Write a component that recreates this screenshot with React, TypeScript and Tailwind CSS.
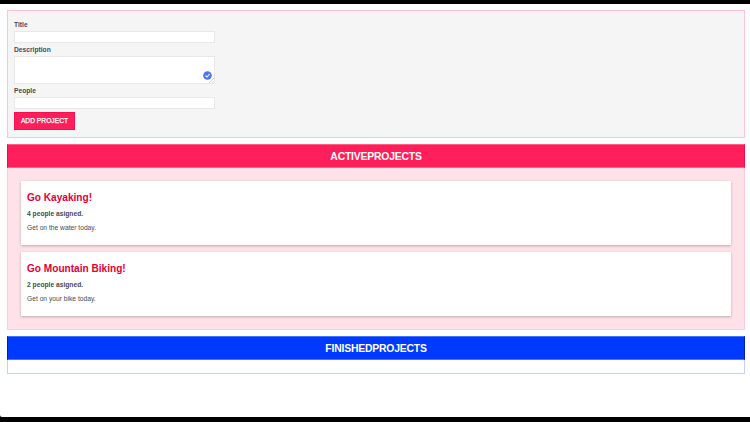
import React from "react";

const projects = [
  { title: "Go Kayaking!", people: "4 people asigned.", text: "Get on the water today." },
  { title: "Go Mountain Biking!", people: "2 people asigned.", text: "Get on your bike today." },
];

function Label({ children }: { children: React.ReactNode }) {
  return <label className="block h-[9px] text-[6.7px] leading-[9px] font-bold text-[#4b4b55]">{children}</label>;
}

function ProjectForm() {
  return (
    <form className="h-[128px] border border-[#ffc4d4] bg-[#f5f5f5] pt-[9px] pl-[6px]">
      <Label>Title</Label>
      <input className="mt-[2px] block h-[12px] w-[201px] border border-[#e8e8e8] bg-white px-1 text-[7px] outline-none" />
      <div className="mt-[2px]">
        <Label>Description</Label>
      </div>
      <div className="relative mt-[2px] h-[28px] w-[201px]">
        <textarea className="block h-full w-full resize-none border border-[#e8e8e8] bg-white px-1 text-[7px] outline-none" />
        <svg className="absolute top-[15px] left-[189px] h-[9px] w-[9px]" viewBox="0 0 9 9">
          <circle cx="4.5" cy="4.5" r="4.3" fill="#4f78ed" />
          <path d="M2.5 4.7 4 6 6.6 3" fill="none" stroke="#fff" strokeWidth="1.1" />
        </svg>
        <svg className="absolute right-[1px] bottom-[1px] h-[5px] w-[5px]" viewBox="0 0 5 5">
          <path d="M0 5 5 0M2.7 5 5 2.7" stroke="#aaa" strokeWidth=".5" />
        </svg>
      </div>
      <div className="mt-[2px]">
        <Label>People</Label>
      </div>
      <input className="mt-[2px] block h-[12px] w-[201px] border border-[#e8e8e8] bg-white px-1 text-[7px] outline-none" />
      <button type="button" className="mt-[3px] block h-[18px] w-[61px] border border-[#f70f51] bg-[#ff1f5a] text-[6.7px] leading-[16px] whitespace-nowrap text-white [-webkit-text-stroke:0.25px_white]">
        ADD PROJECT
      </button>
    </form>
  );
}

export default function App() {
  return (
    <div className="flex h-[422px] w-[750px] flex-col overflow-hidden bg-black pt-[4px] font-['Liberation_Sans',Arial,sans-serif]">
      <main className="h-[413px] rounded-bl-[2px] bg-white pt-[6px] pr-[5px] pl-[7px]">
        <ProjectForm />
        <section className="mt-[6px] h-[186px] border border-[#ffcbd5] bg-[#ffe2e9]">
          <header className="-mx-px -mt-px h-[24px] border border-[#ee0c4b] border-y-[#ff5d83] bg-[#ff1f5a] text-center">
            <h2 className="text-[10.4px] leading-[23px] font-bold tracking-[-0.2px] text-white">ACTIVEPROJECTS</h2>
          </header>
          <ul className="flex flex-col gap-[7px] px-[13px] pt-[13px]">
            {projects.map((p) => (
              <li key={p.title} className="h-[64px] bg-white px-[6px] pt-[11px] shadow-[0_0.5px_2.5px_rgba(0,0,0,0.26)]">
                <h3 className="text-[10.1px] leading-[12px] font-bold text-[#dc0038]">{p.title}</h3>
                <p className="mt-[6px] text-[6.7px] leading-[8px] font-bold text-[#4b4850]">{p.people}</p>
                <p className="mt-[5px] text-[6.7px] leading-[9px] text-[#4b4850]">{p.text}</p>
              </li>
            ))}
          </ul>
        </section>
        <section className="mt-[6px] h-[38px] border border-[#c5d1fa] bg-white">
          <header className="-mx-px -mt-px h-[24px] border border-[#001fae] border-y-[#4773ff] bg-[#0039ff] text-center">
            <h2 className="text-[10.4px] leading-[23px] font-bold tracking-[-0.2px] text-white">FINISHEDPROJECTS</h2>
          </header>
        </section>
      </main>
    </div>
  );
}
